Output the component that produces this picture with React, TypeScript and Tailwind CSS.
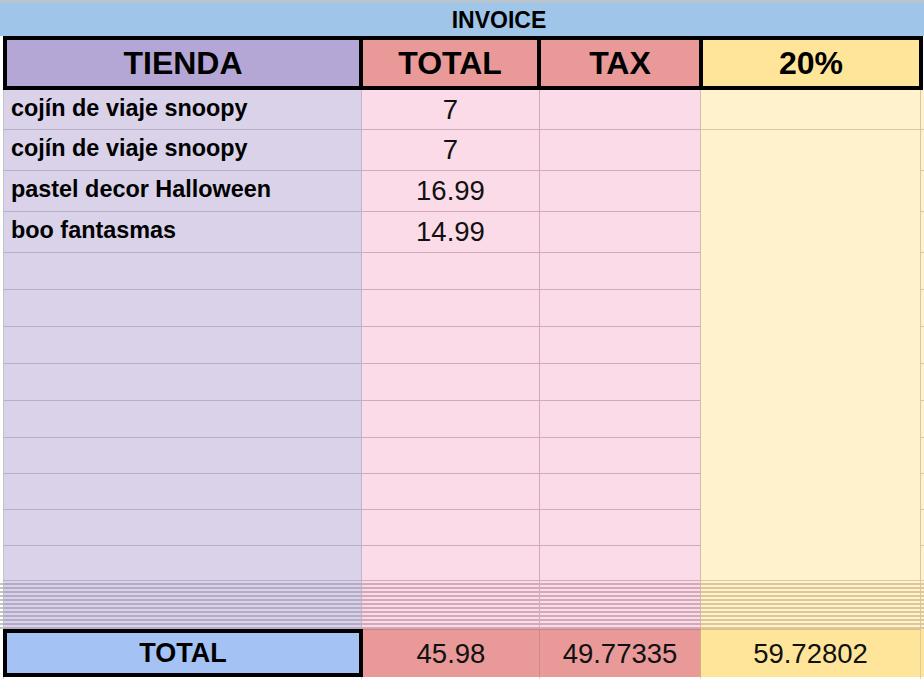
import React from "react";

type Item = { name: string; total: string; h: string };

const items: Item[] = [
  { name: "cojín de viaje snoopy", total: "7", h: "h-[40px]" },
  { name: "cojín de viaje snoopy", total: "7", h: "h-[41px]" },
  { name: "pastel decor Halloween", total: "16.99", h: "h-[41px]" },
  { name: "boo fantasmas", total: "14.99", h: "h-[41px]" },
];

const emptyHeights = [
  "h-[37px]",
  "h-[37px]",
  "h-[37px]",
  "h-[37px]",
  "h-[37px]",
  "h-[36px]",
  "h-[36px]",
  "h-[36px]",
  "h-[35px]",
];

function DataRow({
  h,
  name,
  total,
  yellowLine,
}: {
  h: string;
  name?: string;
  total?: string;
  yellowLine: boolean;
}) {
  return (
    <div className={`flex ${h}`}>
      <div className="w-[3px] shrink-0 bg-white" />
      <div className="w-[359px] shrink-0 bg-[#d9d2e9] border-l border-l-[#c4c4c8] border-r border-r-[#c6b2c2] border-b border-b-[#b7afc7] flex items-center pl-[7px] pb-[2px] font-bold text-[23.4px] leading-none text-black whitespace-nowrap">
        {name}
      </div>
      <div className="w-[178px] shrink-0 bg-[#fbdbe7] border-r border-r-[#d0acbb] border-b border-b-[#d0acbb] flex items-center justify-center text-[27.5px] leading-none text-[#111]">
        {total}
      </div>
      <div className="w-[161px] shrink-0 bg-[#fbdbe7] border-r border-r-[#d3bdae] border-b border-b-[#d0acbb]" />
      <div
        className={`w-[220px] shrink-0 bg-[#fff2cc] border-r border-r-[#d8c7a2] ${
          yellowLine ? "border-b border-b-[#dac9a4]" : ""
        }`}
      />
      <div className="w-[3px] shrink-0 bg-[#fff2cc] border-b border-b-[#dac9a4]" />
    </div>
  );
}

function CollapsedRow() {
  return (
    <div className="flex h-[4px]">
      <div className="w-[3px] shrink-0 bg-white border-b-2 border-b-[#c4c4c4]" />
      <div className="w-[359px] shrink-0 bg-[#d9d2e9] border-l border-l-[#c4c4c8] border-r border-r-[#c6b2c2] border-b-2 border-b-[#b3abc5]" />
      <div className="w-[178px] shrink-0 bg-[#fbdbe7] border-r border-r-[#d0acbb] border-b-2 border-b-[#d2a9b8]" />
      <div className="w-[161px] shrink-0 bg-[#fbdbe7] border-r border-r-[#d3bdae] border-b-2 border-b-[#d2a9b8]" />
      <div className="w-[220px] shrink-0 bg-[#fff2cc] border-r border-r-[#d8c7a2] border-b-2 border-b-[#dcc69a]" />
      <div className="w-[3px] shrink-0 bg-[#fff2cc] border-b-2 border-b-[#dcc69a]" />
    </div>
  );
}

export default function App() {
  return (
    <div className="w-[924px] h-[679px] overflow-hidden bg-white flex flex-col font-['Liberation_Sans',Arial,sans-serif] text-black">
      {/* top strip */}
      <div className="h-[3px] shrink-0 bg-[#b8c4cf]" />
      {/* title */}
      <div className="h-[33px] shrink-0 bg-[#9fc5e8] flex items-center justify-center pl-[74px] pt-[1px] text-[23px] font-bold leading-none">
        INVOICE
      </div>
      {/* header */}
      <div className="flex h-[54px] shrink-0">
        <div className="w-[3px] shrink-0 bg-white" />
        <div className="w-[360px] shrink-0 bg-[#b4a7d6] border-4 border-black flex items-center justify-center text-[32px] font-bold leading-none">
          TIENDA
        </div>
        <div className="w-[178px] shrink-0 bg-[#ea9999] border-y-4 border-r-4 border-black flex items-center justify-center text-[32px] font-bold leading-none">
          TOTAL
        </div>
        <div className="w-[162px] shrink-0 bg-[#ea9999] border-y-4 border-r-4 border-black flex items-center justify-center text-[32px] font-bold leading-none">
          TAX
        </div>
        <div className="w-[220px] shrink-0 bg-[#ffe599] border-y-4 border-r-4 border-black flex items-center justify-center text-[32px] font-bold leading-none">
          20%
        </div>
        <div className="w-[1px] shrink-0 bg-white" />
      </div>
      {/* items */}
      {items.map((it, i) => (
        <DataRow key={i} h={it.h} name={it.name} total={it.total} yellowLine={i === 0} />
      ))}
      {/* empty rows */}
      {emptyHeights.map((h, i) => (
        <DataRow key={`e${i}`} h={h} yellowLine={i === emptyHeights.length - 1} />
      ))}
      {/* collapsed (hidden) rows */}
      {Array.from({ length: 12 }).map((_, i) => (
        <CollapsedRow key={`c${i}`} />
      ))}
      {/* footer */}
      <div className="flex h-[48px] shrink-0">
        <div className="w-[3px] shrink-0 bg-white" />
        <div className="w-[360px] shrink-0 bg-[#a4c2f4] border-4 border-black flex items-center justify-center text-[27px] font-bold leading-none">
          TOTAL
        </div>
        <div className="w-[177px] shrink-0 bg-[#ea9999] border-t border-t-[#cc8383] border-r border-r-[#cf8a8a] flex items-center justify-center text-[27.5px] leading-none text-[#111]">
          45.98
        </div>
        <div className="w-[161px] shrink-0 bg-[#ea9999] border-t border-t-[#cc8383] border-r border-r-[#d2b08a] flex items-center justify-center text-[27.5px] leading-none text-[#111]">
          49.77335
        </div>
        <div className="w-[220px] shrink-0 bg-[#ffe599] border-t border-t-[#d9c07c] border-r border-r-[#d8c7a2] flex items-center justify-center text-[27.5px] leading-none text-[#111]">
          59.72802
        </div>
        <div className="w-[3px] shrink-0 bg-[#ffe599]" />
      </div>
      {/* below footer */}
      <div className="flex h-[2px] shrink-0">
        <div className="w-[3px] shrink-0 bg-white" />
        <div className="w-[359px] shrink-0 bg-white border-l border-r border-[#d6d6d6]" />
        <div className="w-[178px] shrink-0 bg-white border-r border-[#d6d6d6]" />
        <div className="w-[161px] shrink-0 bg-white border-r border-[#d6d6d6]" />
        <div className="w-[220px] shrink-0 bg-white border-r border-[#d6d6d6]" />
        <div className="w-[3px] shrink-0 bg-white" />
      </div>
    </div>
  );
}
